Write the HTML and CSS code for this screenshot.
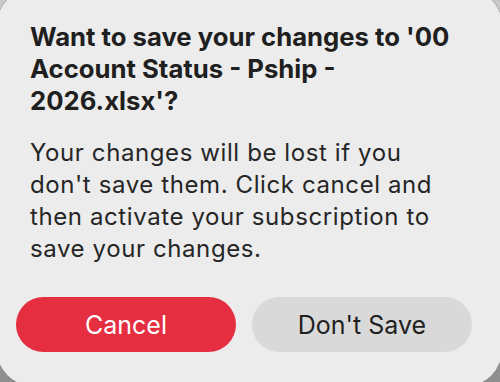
FILE: index.html
```html
<!DOCTYPE html>
<html lang="en">
<head>
<meta charset="utf-8">
<title>Save changes</title>
<link rel="stylesheet" href="styles.css">
</head>
<body>
<div class="alert" role="alertdialog">
  <div class="alert-text">
    <h1 class="alert-title">Want to save your changes to '00 Account Status - Pship - 2026.xlsx'?</h1>
    <p class="alert-message">Your changes will be lost if you don't save them. Click cancel and then activate your subscription to save your changes.</p>
  </div>
  <div class="alert-buttons">
    <button class="btn btn-danger">Cancel</button>
    <button class="btn btn-secondary">Don't Save</button>
  </div>
</div>
</body>
</html>
```
FILE: styles.css
```css
html, body {
  margin: 0;
  padding: 0;
  width: 500px;
  height: 382px;
  overflow: hidden;
}
body {
  background: linear-gradient(180deg, #c9c9c9 0%, #a9a9a9 60%, #8f8f8f 100%);
  font-family: "Inter", "Noto Sans", "Liberation Sans", sans-serif;
}
.alert {
  box-sizing: border-box;
  width: 505px;
  height: 397px;
  margin: -11px 0 0 -3px;
  padding: 32px 19px 0 19px;
  background: #ececec;
  border-radius: 36px;
  box-shadow: 0 0 0 0.5px rgba(0, 0, 0, 0.25);
  display: flex;
  flex-direction: column;
}
.alert-text {
  padding: 0 14px;
}
.alert-title {
  margin: 0;
  font-size: 25.7px;
  line-height: 32px;
  font-weight: 700;
  color: #1f1f1f;
  width: 440px;
}
.alert-message {
  margin: 20px 0 0 0;
  font-size: 24px;
  line-height: 32px;
  font-weight: 400;
  letter-spacing: 0.6px;
  color: #262626;
  width: 420px;
}
.alert-buttons {
  display: flex;
  gap: 16px;
  margin-top: 32px;
}
.btn {
  width: 220px;
  height: 55px;
  border: none;
  border-radius: 28px;
  font-family: inherit;
  font-size: 25px;
  font-weight: 400;
  padding: 0;
}
.btn-danger {
  background: #e52e40;
  color: #ffffff;
}
.btn-secondary {
  background: #d9d9d9;
  color: #1f1f1f;
}
```
